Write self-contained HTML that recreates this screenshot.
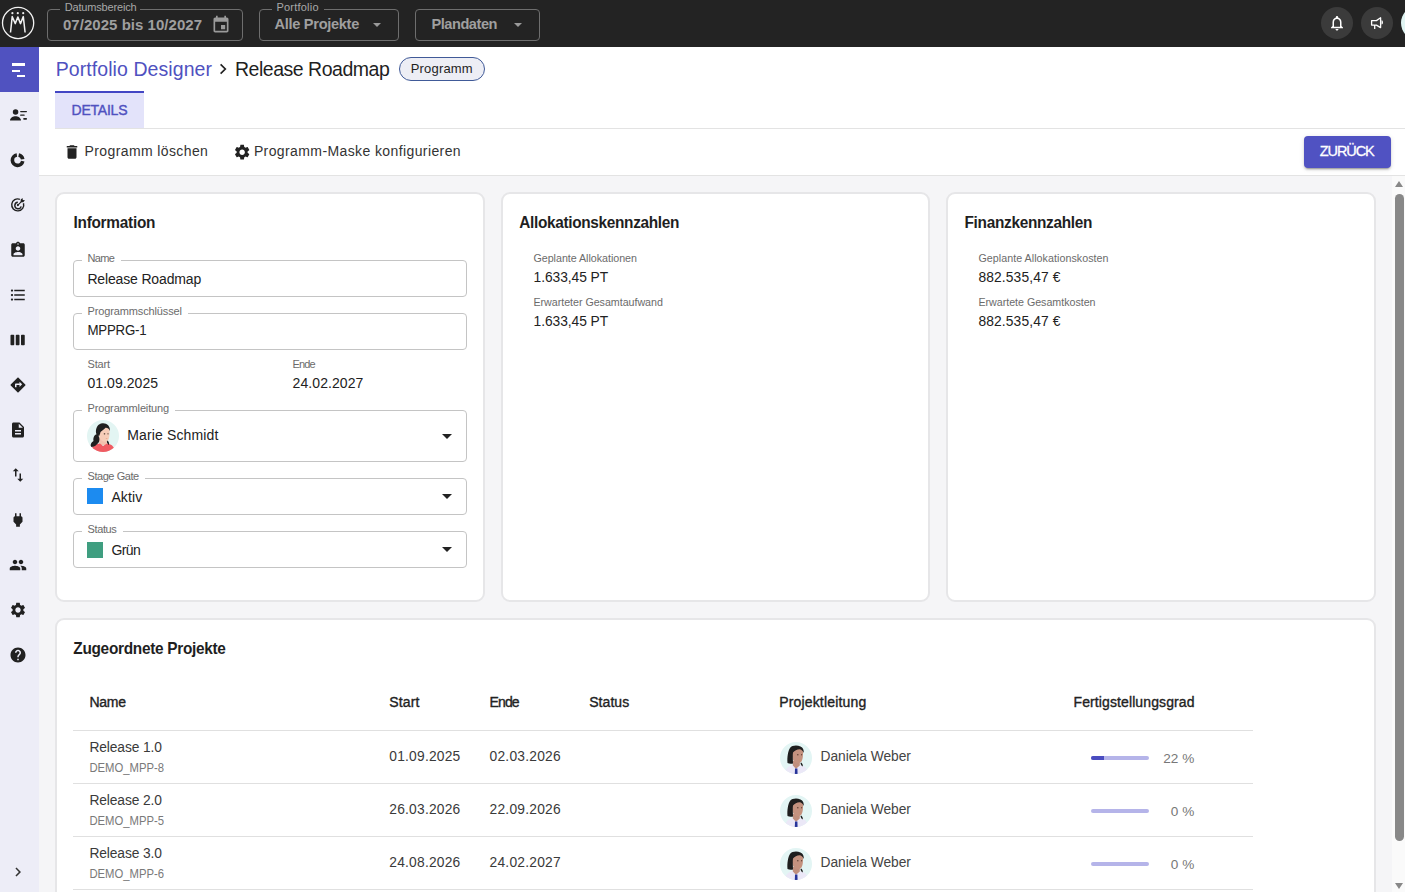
<!DOCTYPE html>
<html><head><meta charset="utf-8"><title>Release Roadmap</title>
<style>
html,body{margin:0;padding:0;}
body{width:1405px;height:892px;overflow:hidden;position:relative;background:#f5f5f7;font-family:"Liberation Sans",sans-serif;}
.t{position:absolute;white-space:nowrap;line-height:1;}
</style></head><body>
<div style="position:absolute;left:0px;top:0px;width:1405px;height:47px;background:#232323;"></div>
<svg style="position:absolute;left:0;top:4px" width="38" height="38" viewBox="0 4 38 38">
<circle cx="18.1" cy="23" r="15.6" fill="none" stroke="#f2f2f2" stroke-width="1.3"/>
<circle cx="12.4" cy="13.2" r="1.1" fill="#eee"/><circle cx="17.8" cy="13.2" r="1.1" fill="#eee"/><circle cx="23.2" cy="13.2" r="1.1" fill="#eee"/>
<path d="M10.5 32.5 L12.2 16.6 L15.3 23.6 L17.8 16.9 L20.5 23.6 L23.3 16.6 L25.1 32.5" fill="none" stroke="#f2f2f2" stroke-width="1.5" stroke-linejoin="round"/>
</svg>
<div style="position:absolute;left:47px;top:9px;width:194px;height:30px;border:1px solid #6e6e6e;border-radius:4px;"></div><div style="position:absolute;left:60px;top:8px;width:80px;height:3px;background:#232323;"></div>
<div class="t" style="left:64.70px;top:2.05px;font-size:11px;color:#a8a8a8;letter-spacing:-0.165px;">Datumsbereich</div>
<div class="t" style="left:63.00px;top:16.52px;font-size:15px;color:#9f9f9f;font-weight:700;letter-spacing:0.031px;">07/2025 bis 10/2027</div>
<svg style="position:absolute;left:210.9px;top:14.9px" width="20" height="20" viewBox="0 0 24 24"><path fill="#9a9a9a" d="M17 12h-5v5h5v-5zM16 1v2H8V1H6v2H5c-1.11 0-1.99.9-1.99 2L3 19c0 1.1.89 2 2 2h14c1.1 0 2-.9 2-2V5c0-1.1-.9-2-2-2h-1V1h-2zm3 18H5V8h14v11z"/></svg>
<div style="position:absolute;left:259px;top:9px;width:138px;height:30px;border:1px solid #6e6e6e;border-radius:4px;"></div><div style="position:absolute;left:272px;top:8px;width:52px;height:3px;background:#232323;"></div>
<div class="t" style="left:276.50px;top:2.05px;font-size:11px;color:#a8a8a8;letter-spacing:0.207px;">Portfolio</div>
<div class="t" style="left:274.60px;top:16.78px;font-size:14.6px;color:#9f9f9f;font-weight:700;letter-spacing:-0.312px;">Alle Projekte</div>
<div style="position:absolute;left:372.8px;top:22.6px;width:0;height:0;border-left:4.25px solid transparent;border-right:4.25px solid transparent;border-top:4.25px solid #9a9a9a;"></div>
<div style="position:absolute;left:415px;top:9px;width:123px;height:30px;border:1px solid #6e6e6e;border-radius:4px;"></div>
<div class="t" style="left:431.50px;top:16.78px;font-size:14.6px;color:#9f9f9f;font-weight:700;letter-spacing:-0.472px;">Plandaten</div>
<div style="position:absolute;left:513.7px;top:22.6px;width:0;height:0;border-left:4.25px solid transparent;border-right:4.25px solid transparent;border-top:4.25px solid #9a9a9a;"></div>
<div style="position:absolute;left:1321px;top:7px;width:32px;height:32px;background:#3b3b3b;border-radius:50%;"></div>
<svg style="position:absolute;left:1328px;top:14px" width="18" height="18" viewBox="0 0 24 24"><path fill="#fff" d="M12 22c1.1 0 2-.9 2-2h-4c0 1.1.89 2 2 2zm6-6v-5c0-3.07-1.64-5.64-4.5-6.32V4c0-.83-.67-1.5-1.5-1.5s-1.5.67-1.5 1.5v.68C7.63 5.36 6 7.92 6 11v5l-2 2v1h16v-1l-2-2zm-2 1H8v-6c0-2.48 1.51-4.5 4-4.5s4 2.02 4 4.5v6z"/></svg>
<div style="position:absolute;left:1361px;top:7px;width:32px;height:32px;background:#3b3b3b;border-radius:50%;"></div>
<svg style="position:absolute;left:1361px;top:7px" width="32" height="32" viewBox="1361 7 32 32"><g fill="none" stroke="#fff" stroke-width="1.3" stroke-linejoin="round"><path d="M1371.6 20.6 H1376.4 L1380.6 17.8 V27.6 L1376.4 25.1 H1371.6z"/><path d="M1374.7 25.1 V28.9"/></g><path d="M1381.5 20.3 A1.5 2.15 0 0 1 1381.5 24.6z" fill="#fff"/></svg>
<div style="position:absolute;left:1401px;top:6px;width:34px;height:34px;background:#e0f4f2;border-radius:50%;"></div>
<div style="position:absolute;left:0px;top:47px;width:39px;height:845px;background:#ededf7;"></div>
<div style="position:absolute;left:0px;top:47px;width:39px;height:45px;background:#5052c0;"></div>
<div style="position:absolute;left:12px;top:63.4px;width:13px;height:2.5px;background:#fff;"></div><div style="position:absolute;left:12px;top:69.5px;width:7.7px;height:2.5px;background:#fff;"></div><div style="position:absolute;left:17.3px;top:74.6px;width:7.7px;height:2.5px;background:#fff;"></div>
<svg style="position:absolute;left:0;top:100px" width="39" height="30" viewBox="0 100 39 30" fill="#212121"><circle cx="15.55" cy="112.1" r="2.75"/><path d="M10 120.6 C10 117.8 13.2 116.3 15.5 116.3 C17.8 116.3 21 117.8 21 120.6z"/><rect x="20.1" y="110.9" width="6.9" height="1.3" rx=".6"/><rect x="20.1" y="114.5" width="4.6" height="1.3" rx=".6"/><rect x="23.2" y="118" width="3.8" height="1.7" rx=".8"/></svg>
<svg style="position:absolute;left:0;top:150px" width="39" height="22" viewBox="0 150 39 22" fill="none" stroke="#212121" stroke-width="3.6"><path d="M22.72 161.1 A5.2 5.2 0 1 1 16.88 155.05"/><path d="M18.68 155.11 A5.2 5.2 0 0 1 22.72 159.3"/></svg>
<svg style="position:absolute;left:9px;top:196px" width="18" height="18" viewBox="0 0 24 24" fill="#212121"><path fill="none" stroke="#212121" stroke-width="1.9" d="M19.3 9.6 A8 8 0 1 1 14.5 4.4"/><path fill="none" stroke="#212121" stroke-width="1.9" d="M16.2 13.8 A4.3 4.3 0 1 1 11.8 8.4"/><circle cx="11.8" cy="12.1" r="1.4"/><path d="M11.6 12.4 L17.4 6.6" stroke="#212121" stroke-width="1.5"/><path d="M15.6 4.8 L18 2.5 L18.4 5.4 L21.3 5.8 L19 8.2 L15.6 8.4z"/></svg>
<svg style="position:absolute;left:9px;top:241px" width="18" height="18" viewBox="0 0 24 24" fill="#212121"><path d="M19 3h-4.18C14.4 1.84 13.3 1 12 1c-1.3 0-2.4.84-2.82 2H5c-1.1 0-2 .9-2 2v14c0 1.1.9 2 2 2h14c1.1 0 2-.9 2-2V5c0-1.1-.9-2-2-2zm-7 0c.55 0 1 .45 1 1s-.45 1-1 1-1-.45-1-1 .45-1 1-1zm0 4c1.66 0 3 1.34 3 3s-1.34 3-3 3-3-1.34-3-3 1.34-3 3-3zm6 12H6v-1.4c0-2 4-3.1 6-3.1s6 1.1 6 3.1V19z"/></svg>
<svg style="position:absolute;left:9px;top:286px" width="18" height="18" viewBox="0 0 24 24" fill="#212121"><path d="M4 10.5c-.83 0-1.5.67-1.5 1.5s.67 1.5 1.5 1.5 1.5-.67 1.5-1.5-.67-1.5-1.5-1.5zm0-6c-.83 0-1.5.67-1.5 1.5S3.17 7.5 4 7.5 5.5 6.83 5.5 6 4.83 4.5 4 4.5zm0 12c-.83 0-1.5.68-1.5 1.5s.68 1.5 1.5 1.5 1.5-.68 1.5-1.5-.67-1.5-1.5-1.5zM7 19h14v-2H7v2zm0-6h14v-2H7v2zm0-8v2h14V5H7z"/></svg>
<svg style="position:absolute;left:9px;top:331px" width="18" height="18" viewBox="0 0 24 24" fill="#212121"><path d="M6 5H3c-.55 0-1 .45-1 1v12c0 .55.45 1 1 1h3c.55 0 1-.45 1-1V6c0-.55-.45-1-1-1zm14 0h-3c-.55 0-1 .45-1 1v12c0 .55.45 1 1 1h3c.55 0 1-.45 1-1V6c0-.55-.45-1-1-1zm-7 0h-3c-.55 0-1 .45-1 1v12c0 .55.45 1 1 1h3c.55 0 1-.45 1-1V6c0-.55-.45-1-1-1z"/></svg>
<svg style="position:absolute;left:9px;top:376px" width="18" height="18" viewBox="0 0 24 24" fill="#212121"><path d="M21.71 11.29l-9-9c-.39-.39-1.02-.39-1.41 0l-9 9c-.39.39-.39 1.02 0 1.41l9 9c.39.39 1.02.39 1.41 0l9-9c.39-.38.39-1.01 0-1.41zM14 14.5V12h-4v3H8v-4c0-.55.45-1 1-1h5V7.5l3.5 3.5-3.5 3.5z"/></svg>
<svg style="position:absolute;left:9px;top:421px" width="18" height="18" viewBox="0 0 24 24" fill="#212121"><path d="M14 2H6c-1.1 0-1.99.9-1.99 2L4 20c0 1.1.89 2 1.99 2H18c1.1 0 2-.9 2-2V8l-6-6zm2 16H8v-2h8v2zm0-4H8v-2h8v2zm-3-5V3.5L18.5 9H13z"/></svg>
<svg style="position:absolute;left:9px;top:466px" width="18" height="18" viewBox="0 0 24 24" fill="#212121"><path d="M9 3L5 6.99h3V14h2V6.99h3L9 3zm7 14.01V10h-2v7.01h-3L15 21l4-3.99h-3z"/></svg>
<svg style="position:absolute;left:9px;top:511px" width="18" height="18" viewBox="0 0 24 24" fill="#212121"><path d="M16.01 7L16 3h-2v4h-4V3H8v4h-.01C7 6.99 6 7.99 6 8.99v5.49L9.5 18v3h5v-3l3.5-3.51v-5.5c0-1-1-2-1.99-1.99z"/></svg>
<svg style="position:absolute;left:9px;top:556px" width="18" height="18" viewBox="0 0 24 24" fill="#212121"><path d="M16 11c1.66 0 2.99-1.34 2.99-3S17.66 5 16 5c-1.66 0-3 1.34-3 3s1.34 3 3 3zm-8 0c1.66 0 2.99-1.34 2.99-3S9.66 5 8 5C6.34 5 5 6.34 5 8s1.34 3 3 3zm0 2c-2.33 0-7 1.17-7 3.5V19h14v-2.5c0-2.33-4.67-3.5-7-3.5zm8 0c-.29 0-.62.02-.97.05 1.16.84 1.97 1.97 1.97 3.45V19h6v-2.5c0-2.33-4.67-3.5-7-3.5z"/></svg>
<svg style="position:absolute;left:9px;top:601px" width="18" height="18" viewBox="0 0 24 24" fill="#212121"><path d="M19.14 12.94c.04-.3.06-.61.06-.94 0-.32-.02-.64-.07-.94l2.03-1.58c.18-.14.23-.41.12-.61l-1.92-3.32c-.12-.22-.37-.29-.59-.22l-2.39.96c-.5-.38-1.03-.7-1.62-.94l-.36-2.54c-.04-.24-.24-.41-.48-.41h-3.84c-.24 0-.43.17-.47.41l-.36 2.54c-.59.24-1.13.57-1.62.94l-2.39-.96c-.22-.08-.47 0-.59.22L2.74 8.87c-.12.21-.08.47.12.61l2.03 1.58c-.05.3-.09.63-.09.94s.02.64.07.94l-2.03 1.58c-.18.14-.23.41-.12.61l1.92 3.32c.12.22.37.29.59.22l2.39-.96c.5.38 1.03.7 1.62.94l.36 2.54c.05.24.24.41.48.41h3.840c.24 0 .44-.17.47-.41l.36-2.54c.59-.24 1.13-.56 1.62-.94l2.39.96c.22.08.47 0 .59-.22l1.92-3.32c.12-.22.07-.47-.12-.61l-2.01-1.58zM12 15.6c-1.98 0-3.6-1.62-3.6-3.6s1.62-3.6 3.6-3.6 3.6 1.62 3.6 3.6-1.62 3.6-3.6 3.6z"/></svg>
<svg style="position:absolute;left:9px;top:646px" width="18" height="18" viewBox="0 0 24 24" fill="#212121"><path d="M12 2C6.48 2 2 6.48 2 12s4.48 10 10 10 10-4.48 10-10S17.52 2 12 2zm1 17h-2v-2h2v2zm2.07-7.75l-.9.92C13.45 12.9 13 13.5 13 15h-2v-.5c0-1.1.45-2.1 1.17-2.830l1.24-1.26c.37-.36.59-.86.59-1.41 0-1.1-.9-2-2-2s-2 .9-2 2H8c0-2.21 1.79-4 4-4s4 1.79 4 4c0 .88-.36 1.68-.93 2.25z"/></svg>
<svg style="position:absolute;left:9px;top:863px" width="18" height="18" viewBox="0 0 24 24" fill="#333"><path d="M10 6L8.59 7.41 13.17 12l-4.58 4.59L10 18l6-6z"/></svg>
<div style="position:absolute;left:39px;top:47px;width:1366px;height:129px;background:#fff;"></div>
<div style="position:absolute;left:55px;top:128px;width:1350px;height:1px;background:#e3e3e3;"></div>
<div style="position:absolute;left:39px;top:175px;width:1366px;height:1px;background:#e3e3e3;"></div>
<div class="t" style="left:55.70px;top:59.71px;font-size:19.5px;color:#4f51c0;letter-spacing:0.077px;transform:scaleY(1.04);transform-origin:0 16.51px;">Portfolio Designer</div>
<svg style="position:absolute;left:218px;top:62px" width="10" height="14" viewBox="0 0 10 14"><path d="M2.6 2.4 L7.3 7 L2.6 11.6" fill="none" stroke="#212121" stroke-width="1.7"/></svg>
<div class="t" style="left:235.00px;top:59.71px;font-size:19.5px;color:#1f1f1f;letter-spacing:-0.480px;transform:scaleY(1.04);transform-origin:0 16.51px;">Release Roadmap</div>
<div style="position:absolute;left:399px;top:57px;width:84px;height:22px;border:1px solid #405a98;border-radius:12px;background:#edeef5;"></div>
<div class="t" style="left:410.70px;top:62.24px;font-size:13px;color:#1f1f1f;letter-spacing:0.188px;">Programm</div>
<div style="position:absolute;left:55px;top:91px;width:89px;height:37px;background:#e3e3fa;"></div>
<div style="position:absolute;left:55px;top:91px;width:89px;height:2px;background:#4346c4;"></div>
<div class="t" style="left:71.50px;top:102.98px;font-size:14px;color:#4f51c0;-webkit-text-stroke:0.4px #4f51c0;letter-spacing:-0.219px;">DETAILS</div>
<svg style="position:absolute;left:63px;top:143px" width="18" height="18" viewBox="0 0 24 24" fill="#222"><path d="M6 19c0 1.1.9 2 2 2h8c1.1 0 2-.9 2-2V7H6v12zM19 4h-3.5l-1-1h-5l-1 1H5v2h14V4z"/></svg>
<div class="t" style="left:84.50px;top:144.48px;font-size:14px;color:#333;letter-spacing:0.394px;">Programm löschen</div>
<svg style="position:absolute;left:232.7px;top:143.2px" width="18.3" height="18.3" viewBox="0 0 24 24" fill="#222"><path d="M19.14 12.94c.04-.3.06-.61.06-.94 0-.32-.02-.64-.07-.94l2.03-1.58c.18-.14.23-.41.12-.61l-1.92-3.32c-.12-.22-.37-.29-.59-.22l-2.39.96c-.5-.38-1.03-.7-1.62-.94l-.36-2.54c-.04-.24-.24-.41-.48-.41h-3.84c-.24 0-.43.17-.47.41l-.36 2.54c-.59.24-1.13.57-1.62.94l-2.39-.96c-.22-.08-.47 0-.59.22L2.74 8.87c-.12.21-.08.47.12.61l2.03 1.58c-.05.3-.09.63-.09.94s.02.64.07.94l-2.03 1.58c-.18.14-.23.41-.12.61l1.92 3.32c.12.22.37.29.59.22l2.39-.96c.5.38 1.03.7 1.62.94l.36 2.54c.05.24.24.41.48.41h3.840c.24 0 .44-.17.47-.41l.36-2.54c.59-.24 1.13-.56 1.62-.94l2.39.96c.22.08.47 0 .59-.22l1.92-3.32c.12-.22.07-.47-.12-.61l-2.01-1.58zM12 15.6c-1.98 0-3.6-1.62-3.6-3.6s1.62-3.6 3.6-3.6 3.6 1.62 3.6 3.6-1.62 3.6-3.6 3.6z"/></svg>
<div class="t" style="left:253.90px;top:144.48px;font-size:14px;color:#333;letter-spacing:0.394px;">Programm-Maske konfigurieren</div>
<div style="position:absolute;left:1304px;top:136px;width:87px;height:32px;background:#5052c2;border-radius:4px;box-shadow:0 3px 1px -2px rgba(0,0,0,.2),0 2px 2px 0 rgba(0,0,0,.14),0 1px 5px 0 rgba(0,0,0,.12);"></div>
<div class="t" style="left:1319.80px;top:144.10px;font-size:14.5px;color:#fff;-webkit-text-stroke:0.3px #fff;letter-spacing:-1.084px;">ZURÜCK</div>
<div style="position:absolute;left:39px;top:176px;width:1353px;height:716px;background:#f5f5f7;"></div>
<div style="position:absolute;left:1392px;top:176px;width:13px;height:716px;background:#fafafa;"></div>
<div style="position:absolute;left:1395px;top:194px;width:9px;height:647px;background:#888;border-radius:5px;"></div>
<div style="position:absolute;left:1395px;top:181px;width:0;height:0;border-left:4.5px solid transparent;border-right:4.5px solid transparent;border-bottom:6px solid #888;"></div>
<div style="position:absolute;left:1395px;top:883px;width:0;height:0;border-left:4.5px solid transparent;border-right:4.5px solid transparent;border-top:6px solid #888;"></div>
<div style="position:absolute;left:55px;top:192px;width:426px;height:406px;background:#fff;border:2px solid #e6e6e8;border-radius:9px;"></div>
<div style="position:absolute;left:501px;top:192px;width:425px;height:406px;background:#fff;border:2px solid #e6e6e8;border-radius:9px;"></div>
<div style="position:absolute;left:946px;top:192px;width:426px;height:406px;background:#fff;border:2px solid #e6e6e8;border-radius:9px;"></div>
<div class="t" style="left:73.50px;top:214.66px;font-size:15.4px;color:#1f1f1f;font-weight:700;letter-spacing:-0.270px;transform:scaleY(1.08);transform-origin:0 13.04px;">Information</div>
<div style="position:absolute;left:73px;top:260px;width:392px;height:35px;border:1px solid #c4c4c4;border-radius:4px;"></div><div style="position:absolute;left:82px;top:259px;width:39px;height:3px;background:#fff;"></div>
<div class="t" style="left:87.40px;top:253.25px;font-size:11px;color:#6b6b6b;letter-spacing:-0.583px;">Name</div>
<div class="t" style="left:87.40px;top:271.88px;font-size:14px;color:#222;letter-spacing:-0.154px;">Release Roadmap</div>
<div style="position:absolute;left:73px;top:313px;width:392px;height:35px;border:1px solid #c4c4c4;border-radius:4px;"></div><div style="position:absolute;left:82px;top:312px;width:106px;height:3px;background:#fff;"></div>
<div class="t" style="left:87.50px;top:306.25px;font-size:11px;color:#6b6b6b;letter-spacing:-0.130px;">Programmschlüssel</div>
<div class="t" style="left:87.50px;top:324.49px;font-size:13.3px;color:#222;letter-spacing:-0.232px;transform:scaleY(1.06);transform-origin:0 11.26px;">MPPRG-1</div>
<div class="t" style="left:87.50px;top:359.15px;font-size:11px;color:#6b6b6b;letter-spacing:-0.183px;">Start</div>
<div class="t" style="left:87.50px;top:376.28px;font-size:14px;color:#222;letter-spacing:0.048px;">01.09.2025</div>
<div class="t" style="left:292.60px;top:359.15px;font-size:11px;color:#6b6b6b;letter-spacing:-0.895px;">Ende</div>
<div class="t" style="left:292.60px;top:376.28px;font-size:14px;color:#222;letter-spacing:0.081px;">24.02.2027</div>
<div style="position:absolute;left:73px;top:410px;width:392px;height:50px;border:1px solid #c4c4c4;border-radius:4px;"></div><div style="position:absolute;left:82px;top:409px;width:93px;height:3px;background:#fff;"></div>
<div class="t" style="left:87.50px;top:403.25px;font-size:11px;color:#6b6b6b;letter-spacing:-0.154px;">Programmleitung</div>
<div class="t" style="left:127.30px;top:428.08px;font-size:14px;color:#222;letter-spacing:0.127px;">Marie Schmidt</div>
<div style="position:absolute;left:73px;top:478px;width:392px;height:35px;border:1px solid #c4c4c4;border-radius:4px;"></div><div style="position:absolute;left:82px;top:477px;width:63px;height:3px;background:#fff;"></div>
<div class="t" style="left:87.50px;top:471.25px;font-size:11px;color:#6b6b6b;letter-spacing:-0.439px;">Stage Gate</div>
<div style="position:absolute;left:87px;top:488px;width:16px;height:16px;background:#1c8bf0;"></div>
<div class="t" style="left:111.40px;top:489.88px;font-size:14px;color:#222;letter-spacing:0.116px;">Aktiv</div>
<div style="position:absolute;left:73px;top:531px;width:392px;height:35px;border:1px solid #c4c4c4;border-radius:4px;"></div><div style="position:absolute;left:82px;top:530px;width:41px;height:3px;background:#fff;"></div>
<div class="t" style="left:87.50px;top:524.25px;font-size:11px;color:#6b6b6b;letter-spacing:-0.377px;">Status</div>
<div style="position:absolute;left:87px;top:542px;width:16px;height:16px;background:#3f9e80;"></div>
<div class="t" style="left:111.40px;top:542.88px;font-size:14px;color:#222;letter-spacing:-0.607px;">Grün</div>
<div style="position:absolute;left:442px;top:434px;width:0;height:0;border-left:5px solid transparent;border-right:5px solid transparent;border-top:5px solid #222;"></div>
<div style="position:absolute;left:442px;top:494px;width:0;height:0;border-left:5px solid transparent;border-right:5px solid transparent;border-top:5px solid #222;"></div>
<div style="position:absolute;left:442px;top:547px;width:0;height:0;border-left:5px solid transparent;border-right:5px solid transparent;border-top:5px solid #222;"></div>
<svg style="position:absolute;left:87px;top:420px" width="32" height="32" viewBox="0 0 32 32">
<defs><clipPath id="cm87420"><circle cx="16" cy="16" r="16"/></clipPath></defs>
<circle cx="16" cy="16" r="16" fill="#e3f5f3"/>
<g clip-path="url(#cm87420)">
<path d="M12 18 L12.5 25 L20 25 L19.5 18z" fill="#f3c1ae"/>
<path d="M3.5 33 C4 27 8 24 13 23.5 L16 26 L20 23.5 C24 24 27.5 26 28.5 33z" fill="#f05b62"/>
<path d="M11 7 C11 12 11.5 17 14 20 C16 22 19 22.5 21 20.5 C22.5 18 22.8 13 22.5 9 C21 6 14 5 11 7z" fill="#f6cdb8"/>
<path d="M9 13 C8.5 8 11 3.5 15.5 3.3 C20 3 23.2 6 23 11 C22 8.5 20 7.5 18.5 7.8 C17 9.5 15 11 13.5 12 C13 14 12.5 15.5 12 16 C10.5 15.5 9.5 14.5 9 13z" fill="#1f1f1f"/>
<path d="M10 14 C7 15 6 18 6.5 21 C4 22.5 3 25 4 27 C7 27 10 25 12 22 C13 19 12.5 16 10 14z" fill="#1f1f1f"/>
<path d="M20.5 20.5 C21.5 21.5 22.5 22.5 22 25 C21 24.5 20 23 19.8 21.8z" fill="#1f1f1f"/>
<ellipse cx="17.5" cy="13.8" rx="0.8" ry="0.6" fill="#3a2a20"/><ellipse cx="21" cy="13.8" rx="0.6" ry="0.6" fill="#3a2a20"/>
<path d="M18.6 18.4 Q19.6 19 20.6 18.4 Q19.6 19.4 18.6 18.4z" fill="#c8562a"/>
</g></svg>
<div class="t" style="left:519.30px;top:214.66px;font-size:15.4px;color:#1f1f1f;font-weight:700;letter-spacing:-0.334px;transform:scaleY(1.08);transform-origin:0 13.04px;">Allokationskennzahlen</div>
<div class="t" style="left:533.50px;top:253.30px;font-size:10.7px;color:#6b6b6b;letter-spacing:-0.026px;">Geplante Allokationen</div>
<div class="t" style="left:533.50px;top:270.61px;font-size:13.8px;color:#222;letter-spacing:-0.048px;">1.633,45 PT</div>
<div class="t" style="left:533.50px;top:296.90px;font-size:10.7px;color:#6b6b6b;letter-spacing:-0.032px;">Erwarteter Gesamtaufwand</div>
<div class="t" style="left:533.50px;top:314.81px;font-size:13.8px;color:#222;letter-spacing:-0.048px;">1.633,45 PT</div>
<div class="t" style="left:964.50px;top:214.66px;font-size:15.4px;color:#1f1f1f;font-weight:700;letter-spacing:-0.308px;transform:scaleY(1.08);transform-origin:0 13.04px;">Finanzkennzahlen</div>
<div class="t" style="left:978.40px;top:253.30px;font-size:10.7px;color:#6b6b6b;letter-spacing:0.049px;">Geplante Allokationskosten</div>
<div class="t" style="left:978.40px;top:270.61px;font-size:13.8px;color:#222;letter-spacing:0.138px;">882.535,47 €</div>
<div class="t" style="left:978.40px;top:296.90px;font-size:10.7px;color:#6b6b6b;letter-spacing:-0.021px;">Erwartete Gesamtkosten</div>
<div class="t" style="left:978.40px;top:314.81px;font-size:13.8px;color:#222;letter-spacing:0.138px;">882.535,47 €</div>
<div style="position:absolute;left:55px;top:618px;width:1317px;height:316px;background:#fff;border:2px solid #e6e6e8;border-radius:9px;"></div>
<div class="t" style="left:73.30px;top:640.76px;font-size:15.4px;color:#1f1f1f;font-weight:700;letter-spacing:-0.295px;transform:scaleY(1.08);transform-origin:0 13.04px;">Zugeordnete Projekte</div>
<div class="t" style="left:89.40px;top:694.98px;font-size:14px;color:#222;-webkit-text-stroke:0.35px #222;letter-spacing:-0.217px;">Name</div>
<div class="t" style="left:389.30px;top:694.98px;font-size:14px;color:#222;-webkit-text-stroke:0.35px #222;letter-spacing:0.108px;">Start</div>
<div class="t" style="left:489.60px;top:694.98px;font-size:14px;color:#222;-webkit-text-stroke:0.35px #222;letter-spacing:-0.897px;">Ende</div>
<div class="t" style="left:589.20px;top:694.98px;font-size:14px;color:#222;-webkit-text-stroke:0.35px #222;letter-spacing:0.062px;">Status</div>
<div class="t" style="left:779.20px;top:694.98px;font-size:14px;color:#222;-webkit-text-stroke:0.35px #222;letter-spacing:0.167px;">Projektleitung</div>
<div class="t" style="left:1073.50px;top:694.98px;font-size:14px;color:#222;-webkit-text-stroke:0.35px #222;letter-spacing:0.108px;">Fertigstellungsgrad</div>
<div style="position:absolute;left:73px;top:730px;width:1180px;height:1px;background:#e0e0e0;"></div>
<div class="t" style="left:89.40px;top:740.91px;font-size:13.8px;color:#3a3a3a;letter-spacing:-0.105px;">Release 1.0</div>
<div class="t" style="left:89.40px;top:762.81px;font-size:11.3px;color:#7a7a7a;letter-spacing:-0.013px;transform:scaleY(1.1);transform-origin:0 9.57px;">DEMO_MPP-8</div>
<div class="t" style="left:389.30px;top:749.91px;font-size:13.8px;color:#3a3a3a;letter-spacing:0.215px;">01.09.2025</div>
<div class="t" style="left:489.60px;top:749.91px;font-size:13.8px;color:#3a3a3a;letter-spacing:0.215px;">02.03.2026</div>
<svg style="position:absolute;left:780px;top:742px" width="32" height="32" viewBox="0 0 32 32">
<defs><clipPath id="cd780742"><circle cx="16" cy="16" r="16"/></clipPath></defs>
<circle cx="16" cy="16" r="16" fill="#e3f5f4"/>
<g clip-path="url(#cd780742)">
<path d="M4 33 C5 26.5 9 23.5 13 23 L20 23 C24 23.5 27.5 26 28.5 33z" fill="#ebe8f7"/>
<path d="M12.8 19 L12.8 23.5 L16 26.8 L19.8 23.5 L19.8 19z" fill="#c08f7d"/>
<path d="M15 26.4 L17.4 26.4 L17.6 32 L14.8 32z" fill="#27349a"/>
<path d="M11.5 7.5 C11.5 13 12 17 14 19.5 C16 21.5 19.5 21.5 21.5 19.5 C23 17 23.2 12 23 8.5 C21 6 14 5.5 11.5 7.5z" fill="#c4927f"/>
<path d="M7.5 21 C7 15 8 9 10 6 C12 3.3 17 3 20.5 4.5 C23 5.7 24 8 23.8 11 C22.5 8.5 21 7.2 19.5 7.3 C17 7.5 14.5 8.5 13 10.5 C12.5 13 13 18 13 21.5 C11 22 9 21.8 7.5 21z" fill="#1e1e1e"/>
<path d="M21 20.5 C22 21 23 22.5 22.8 24.5 C21.8 24 21 23 20.5 21.5z" fill="#1e1e1e"/>
<ellipse cx="17.8" cy="12.8" rx="0.8" ry="0.55" fill="#3a2218"/><ellipse cx="21.6" cy="12.8" rx="0.6" ry="0.55" fill="#3a2218"/>
<path d="M19 17.5 Q20 18.3 21 17.5 Q20 18.9 19 17.5z" fill="#e09a4a"/>
</g></svg>
<div class="t" style="left:820.60px;top:750.21px;font-size:13.8px;color:#444;letter-spacing:-0.060px;">Daniela Weber</div>
<div style="position:absolute;left:1091px;top:756px;width:58px;height:4px;background:#b5b4e9;border-radius:2px;"></div>
<div style="position:absolute;left:1091px;top:756px;width:12.8px;height:4px;background:#4a4cc0;border-radius:2px 0 0 2px;"></div>
<div class="t" style="left:1163.31px;top:751.94px;font-size:13.6px;color:#777;">22 %</div>
<div style="position:absolute;left:73px;top:783px;width:1180px;height:1px;background:#e0e0e0;"></div>
<div class="t" style="left:89.40px;top:793.91px;font-size:13.8px;color:#3a3a3a;letter-spacing:-0.105px;">Release 2.0</div>
<div class="t" style="left:89.40px;top:815.81px;font-size:11.3px;color:#7a7a7a;letter-spacing:-0.013px;transform:scaleY(1.1);transform-origin:0 9.57px;">DEMO_MPP-5</div>
<div class="t" style="left:389.30px;top:802.91px;font-size:13.8px;color:#3a3a3a;letter-spacing:0.215px;">26.03.2026</div>
<div class="t" style="left:489.60px;top:802.91px;font-size:13.8px;color:#3a3a3a;letter-spacing:0.215px;">22.09.2026</div>
<svg style="position:absolute;left:780px;top:795px" width="32" height="32" viewBox="0 0 32 32">
<defs><clipPath id="cd780795"><circle cx="16" cy="16" r="16"/></clipPath></defs>
<circle cx="16" cy="16" r="16" fill="#e3f5f4"/>
<g clip-path="url(#cd780795)">
<path d="M4 33 C5 26.5 9 23.5 13 23 L20 23 C24 23.5 27.5 26 28.5 33z" fill="#ebe8f7"/>
<path d="M12.8 19 L12.8 23.5 L16 26.8 L19.8 23.5 L19.8 19z" fill="#c08f7d"/>
<path d="M15 26.4 L17.4 26.4 L17.6 32 L14.8 32z" fill="#27349a"/>
<path d="M11.5 7.5 C11.5 13 12 17 14 19.5 C16 21.5 19.5 21.5 21.5 19.5 C23 17 23.2 12 23 8.5 C21 6 14 5.5 11.5 7.5z" fill="#c4927f"/>
<path d="M7.5 21 C7 15 8 9 10 6 C12 3.3 17 3 20.5 4.5 C23 5.7 24 8 23.8 11 C22.5 8.5 21 7.2 19.5 7.3 C17 7.5 14.5 8.5 13 10.5 C12.5 13 13 18 13 21.5 C11 22 9 21.8 7.5 21z" fill="#1e1e1e"/>
<path d="M21 20.5 C22 21 23 22.5 22.8 24.5 C21.8 24 21 23 20.5 21.5z" fill="#1e1e1e"/>
<ellipse cx="17.8" cy="12.8" rx="0.8" ry="0.55" fill="#3a2218"/><ellipse cx="21.6" cy="12.8" rx="0.6" ry="0.55" fill="#3a2218"/>
<path d="M19 17.5 Q20 18.3 21 17.5 Q20 18.9 19 17.5z" fill="#e09a4a"/>
</g></svg>
<div class="t" style="left:820.60px;top:803.21px;font-size:13.8px;color:#444;letter-spacing:-0.060px;">Daniela Weber</div>
<div style="position:absolute;left:1091px;top:809px;width:58px;height:4px;background:#b5b4e9;border-radius:2px;"></div>
<div class="t" style="left:1170.87px;top:804.94px;font-size:13.6px;color:#777;">0 %</div>
<div style="position:absolute;left:73px;top:836px;width:1180px;height:1px;background:#e0e0e0;"></div>
<div class="t" style="left:89.40px;top:846.91px;font-size:13.8px;color:#3a3a3a;letter-spacing:-0.105px;">Release 3.0</div>
<div class="t" style="left:89.40px;top:868.81px;font-size:11.3px;color:#7a7a7a;letter-spacing:-0.013px;transform:scaleY(1.1);transform-origin:0 9.57px;">DEMO_MPP-6</div>
<div class="t" style="left:389.30px;top:855.91px;font-size:13.8px;color:#3a3a3a;letter-spacing:0.215px;">24.08.2026</div>
<div class="t" style="left:489.60px;top:855.91px;font-size:13.8px;color:#3a3a3a;letter-spacing:0.215px;">24.02.2027</div>
<svg style="position:absolute;left:780px;top:848px" width="32" height="32" viewBox="0 0 32 32">
<defs><clipPath id="cd780848"><circle cx="16" cy="16" r="16"/></clipPath></defs>
<circle cx="16" cy="16" r="16" fill="#e3f5f4"/>
<g clip-path="url(#cd780848)">
<path d="M4 33 C5 26.5 9 23.5 13 23 L20 23 C24 23.5 27.5 26 28.5 33z" fill="#ebe8f7"/>
<path d="M12.8 19 L12.8 23.5 L16 26.8 L19.8 23.5 L19.8 19z" fill="#c08f7d"/>
<path d="M15 26.4 L17.4 26.4 L17.6 32 L14.8 32z" fill="#27349a"/>
<path d="M11.5 7.5 C11.5 13 12 17 14 19.5 C16 21.5 19.5 21.5 21.5 19.5 C23 17 23.2 12 23 8.5 C21 6 14 5.5 11.5 7.5z" fill="#c4927f"/>
<path d="M7.5 21 C7 15 8 9 10 6 C12 3.3 17 3 20.5 4.5 C23 5.7 24 8 23.8 11 C22.5 8.5 21 7.2 19.5 7.3 C17 7.5 14.5 8.5 13 10.5 C12.5 13 13 18 13 21.5 C11 22 9 21.8 7.5 21z" fill="#1e1e1e"/>
<path d="M21 20.5 C22 21 23 22.5 22.8 24.5 C21.8 24 21 23 20.5 21.5z" fill="#1e1e1e"/>
<ellipse cx="17.8" cy="12.8" rx="0.8" ry="0.55" fill="#3a2218"/><ellipse cx="21.6" cy="12.8" rx="0.6" ry="0.55" fill="#3a2218"/>
<path d="M19 17.5 Q20 18.3 21 17.5 Q20 18.9 19 17.5z" fill="#e09a4a"/>
</g></svg>
<div class="t" style="left:820.60px;top:856.21px;font-size:13.8px;color:#444;letter-spacing:-0.060px;">Daniela Weber</div>
<div style="position:absolute;left:1091px;top:862px;width:58px;height:4px;background:#b5b4e9;border-radius:2px;"></div>
<div class="t" style="left:1170.87px;top:857.94px;font-size:13.6px;color:#777;">0 %</div>
<div style="position:absolute;left:73px;top:889px;width:1180px;height:1px;background:#e0e0e0;"></div>
</body></html>
